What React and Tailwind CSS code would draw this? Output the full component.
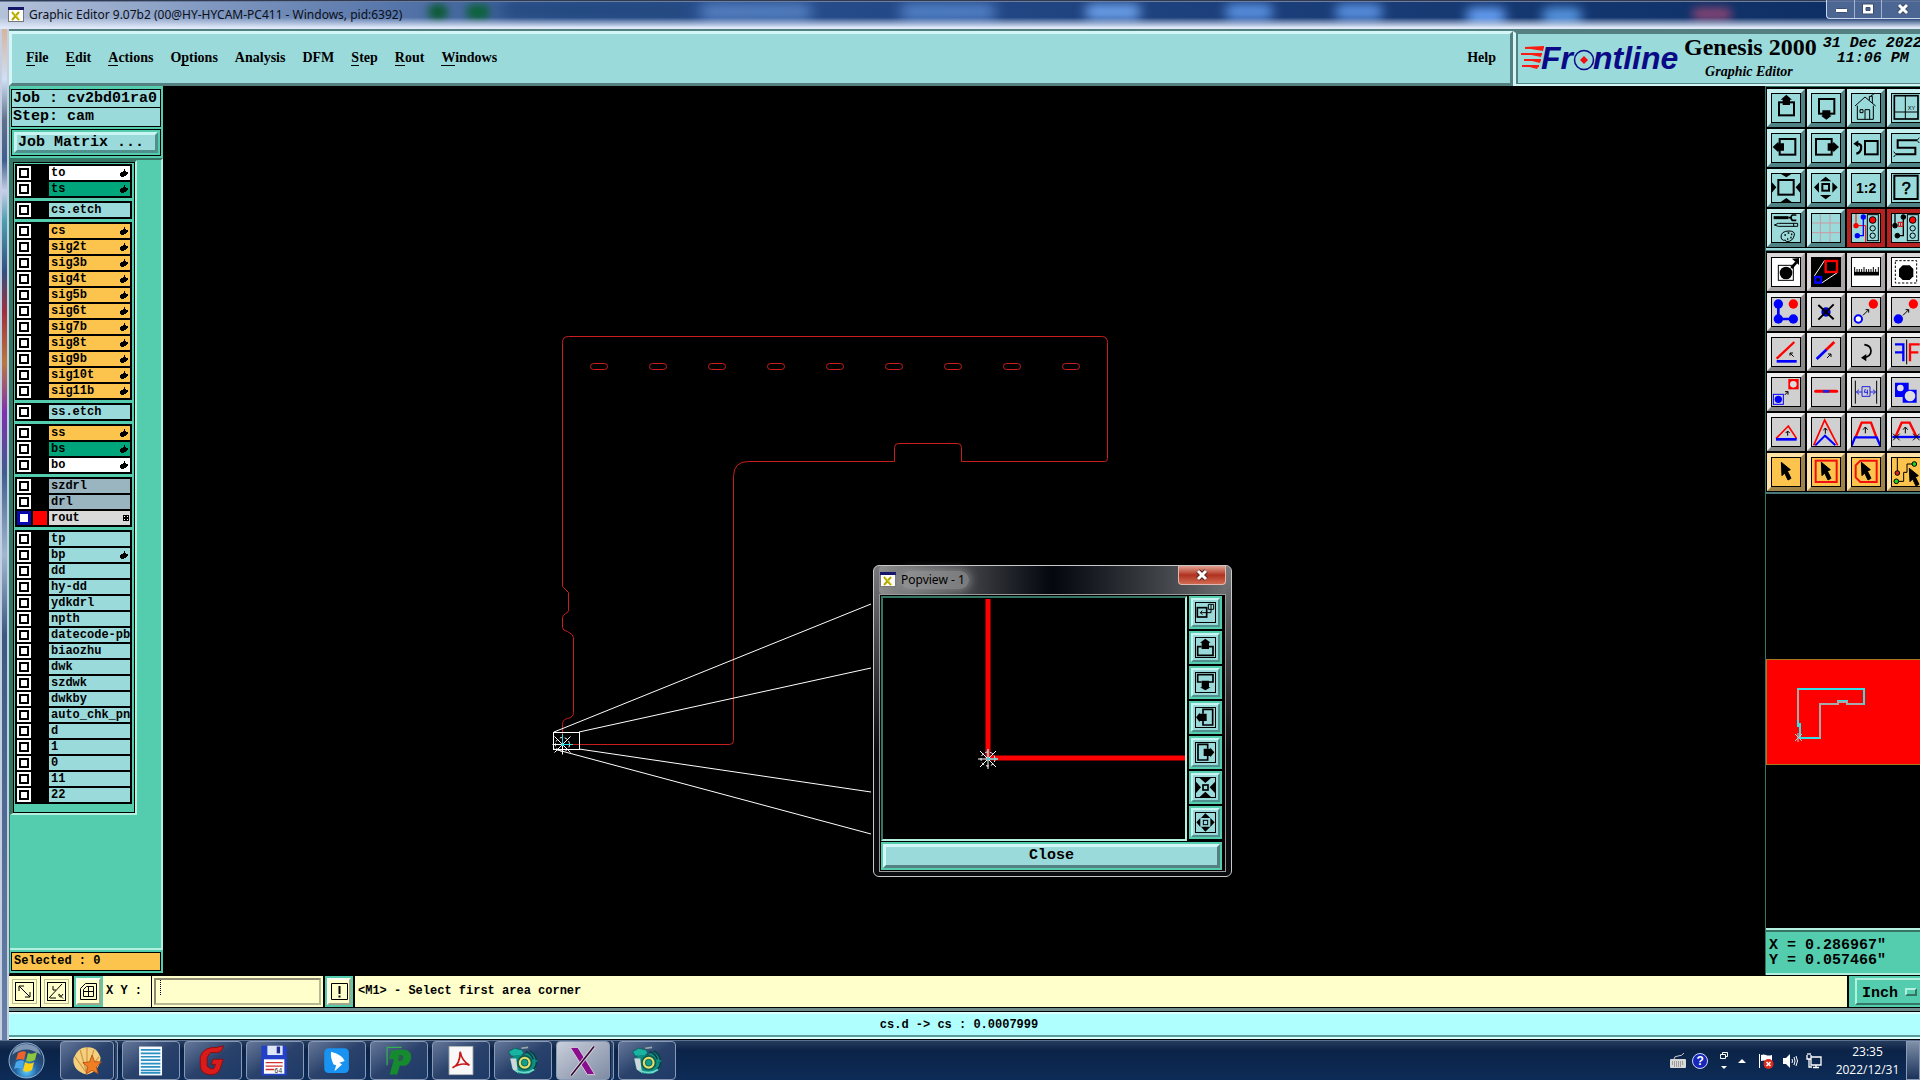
import React from "react";

const mono12 = "font-['Liberation_Mono',monospace] text-[12px] font-bold";
const mono15 = "font-['Liberation_Mono',monospace] text-[15px] font-bold";

const aquaBevel = "bg-[#9bdadb] border-3 border-t-[#d3f7f6] border-l-[#d3f7f6] border-b-[#558082] border-r-[#558082]";
const greenBevel = "bg-[#9bdadb] border-3 border-t-[#c8f5f1] border-l-[#c8f5f1] border-b-[#4f8f8c] border-r-[#4f8f8c]";

const menus = [
  ["", "F", "ile"], ["", "E", "dit"], ["", "A", "ctions"], ["O", "p", "tions"], ["Analysis", "", ""],
  ["DFM", "", ""], ["", "S", "tep"], ["", "R", "out"], ["", "W", "indows"],
];

const W = "bg-white", G = "bg-[#00a57c]", A = "bg-[#9bdadb]", O = "bg-[#fcc44c]", B = "bg-[#9ab4c0]", L = "bg-[#d9d9d9]";
const groups = [
  [["to", W, "h"], ["ts", G, "h"]],
  [["cs.etch", A]],
  ["cs", "sig2t", "sig3b", "sig4t", "sig5b", "sig6t", "sig7b", "sig8t", "sig9b", "sig10t", "sig11b"].map((n) => [n, O, "h"]),
  [["ss.etch", A]],
  [["ss", O, "h"], ["bs", G, "h"], ["bo", W, "h"]],
  [["szdrl", B], ["drl", B], ["rout", L, "g"]],
  [["tp", A], ["bp", A, "h"], ...["dd", "hy-dd", "ydkdrl", "npth", "datecode-pbd", "biaozhu", "dwk", "szdwk", "dwkby", "auto_chk_pnl", "d", "1", "0", "11", "22"].map((n) => [n, A])],
];

function WinIcon() {
  return (
    <svg className="h-[15px] w-4 shrink-0" viewBox="0 0 16 15">
      <rect width="16" height="15" fill="#777" />
      <rect x="1" y="3" width="14" height="11" fill="#fff" />
      <rect width="16" height="3" fill="#15156a" />
      <path d="M4 5l7 8M11 5l-7 8" stroke="#b5a800" strokeWidth="2" />
      <path d="M5 5l7 8" stroke="#e6dc30" strokeWidth="1" />
    </svg>
  );
}

function TitleBar() {
  return (
    <header className="relative flex h-[29px] shrink-0 items-start overflow-hidden bg-gradient-to-r from-[#b4c2da] via-[#2c5292] via-30% to-[#0b2d63]">
      <div className="absolute top-1 left-[428px] h-4 w-5 rounded-full bg-[#0a5a30] blur-[4px]" />
      <div className="absolute top-1 left-[466px] h-4 w-6 rounded-full bg-[#0c6238] blur-[4px]" />
      <div className="absolute top-0 left-[500px] h-5 w-48 rounded-full bg-[#24497f] blur-[8px]" />
      <div className="absolute top-1 left-[700px] h-4 w-28 rounded-full bg-[#6d9ce0]/70 blur-[7px]" />
      <div className="absolute top-1 left-[900px] h-4 w-24 rounded-full bg-[#6ea3ee]/70 blur-[7px]" />
      <div className="absolute top-1 left-[1085px] h-4 w-14 rounded-full bg-[#6ea3ee] blur-[6px]" />
      <div className="absolute top-1 left-[1225px] h-4 w-12 rounded-full bg-[#5b93e4] blur-[6px]" />
      <div className="absolute top-1 left-[1335px] h-4 w-12 rounded-full bg-[#5b93e4] blur-[6px]" />
      <div className="absolute top-2 left-[1466px] h-4 w-10 rounded-full bg-[#6aa5fb] blur-[6px]" />
      <div className="absolute top-2 left-[1542px] h-4 w-10 rounded-full bg-[#5a9be6] blur-[6px]" />
      <div className="absolute top-2 left-[1692px] h-3 w-10 rounded-full bg-[#8a4474] blur-[5px]" />
      <div className="absolute inset-0 bg-gradient-to-b from-transparent from-60% to-[#dfe8f8] to-95%" />
      <div className="absolute inset-x-0 top-0 h-[2px] bg-gradient-to-b from-[#141c30] to-[#8fa3c6]" />
      <div className="relative ml-2 flex h-[29px] items-center gap-[5px]">
        <WinIcon />
        <h1 className="font-['Noto_Sans','Open_Sans',sans-serif] text-[12px] font-normal text-[#0b0f18]">
          Graphic Editor 9.07b2 (00@HY-HYCAM-PC411 - Windows, pid:6392)
        </h1>
      </div>
      <div className="relative ml-auto flex h-[19px] rounded-bl border-b border-l border-[#c9d6ea] bg-[#5d74a0]/80">
        <button aria-label="Minimize" className="flex w-7 items-center justify-center border-r border-[#c9d6ea]/70">
          <svg className="h-4 w-4" viewBox="0 0 16 16"><rect x="2.5" y="7.5" width="12" height="4" rx="1" fill="#fff" stroke="#3c4c6c" /></svg>
        </button>
        <button aria-label="Maximize" className="flex w-[27px] items-center justify-center border-r border-[#c9d6ea]/70">
          <svg className="h-4 w-4" viewBox="0 0 16 16"><path d="M2.500 3h11v10h-11zM6 6.500v3h4v-3z" fill="#fff" fillRule="evenodd" stroke="#3c4c6c" /></svg>
        </button>
        <button aria-label="Close window" className="flex w-[38px] items-center justify-center pl-1">
          <svg className="h-4 w-4" viewBox="0 0 16 16"><path d="M4 4l8 8M12 4l-8 8" stroke="#3c4c6c" strokeWidth="5" /><path d="M4 4l8 8M12 4l-8 8" stroke="#fff" strokeWidth="3" /></svg>
        </button>
      </div>
    </header>
  );
}

function MenuBar() {
  return (
    <div className="flex h-[57px] shrink-0 border-t-2 border-[#558082] bg-[#558082] font-['Liberation_Serif',serif] font-bold text-black">
      <nav className="flex flex-1 items-center border-3 border-t-[#d3f7f6] border-r-[#558082] border-b-[#558082] border-l-[#d3f7f6] bg-[#9bdadb] pr-[14px] pb-[2px] pl-[14px] text-[14px]">
        <div className="flex flex-1 gap-[17px]">
          {menus.map(([a, u, b]) => (
            <button key={a + u + b} className="leading-4">
              {a}<span className="border-b border-black">{u}</span>{b}
            </button>
          ))}
        </div>
        <button className="leading-4">Help</button>
      </nav>
      <div className="flex w-[407px] shrink-0 overflow-hidden border-t-2 border-b-2 border-l-3 border-t-[#558082] border-b-[#d3f7f6] border-l-[#d3f7f6] bg-[#9bdadb] shadow-[inset_1px_0_0_1px_#558082]">
        <svg className="mt-[11px] ml-[5px] h-7 w-[160px] shrink-0 overflow-visible" viewBox="0 0 160 28">
          <path d="M4 4l19-1-1 4zM0 9l21 0-1 4zM3 15l17 0-1 4zM1 21l17 0-2 4z" fill="#fb1b12" />
          <path d="M4 4l19-1M0 10h21M3 16h17M1 22h17" stroke="#fb1b12" strokeWidth="2" />
          <g fill="#0a0a86" fontFamily="Liberation Sans, sans-serif" fontWeight="bold" fontStyle="italic" fontSize="32">
            <text x="20" y="25">Fr</text>
            <text x="72" y="25">ntline</text>
          </g>
          <circle cx="63" cy="16" r="9.500" fill="#9bdadb" stroke="#0a0a86" strokeWidth="1.500" />
          <path d="M63 12l4 4-4 4-4-4z" fill="#f01010" />
        </svg>
        <div className="flex shrink-0 flex-col items-center whitespace-nowrap">
          <span className="ml-[3px] text-[24px] leading-[28px]">Genesis 2000</span>
          <span className="text-[14px] leading-[22px] italic">Graphic Editor</span>
        </div>
        <div className={`ml-[6px] shrink-0 whitespace-pre pt-[3px] italic ${mono15}`}>
          <div className="leading-[15px]">31 Dec 2022</div>
          <div className="pl-[14px] leading-[15px]">11:06 PM</div>
        </div>
      </div>
    </div>
  );
}

function LayerRow({ name, color, mark }) {
  const on = name === "rout";
  return (
    <label className="flex h-4 items-center gap-[2px] pr-[2px] pl-[2px]">
      <input
        type="checkbox"
        defaultChecked={on}
        aria-label={name}
        className="h-[14px] w-[14px] shrink-0 appearance-none border-2 border-white bg-white shadow-[inset_0_0_0_2px_#000] checked:border-[#0a0aa0] checked:bg-white checked:shadow-[inset_0_0_0_1px_#0000c0]"
      />
      <span className={`h-[14px] w-[14px] shrink-0 ${on ? "bg-[#ff0000]" : "bg-black"}`} />
      <span className={`flex h-[14px] min-w-0 flex-1 items-center overflow-hidden pl-[2px] leading-[14px] whitespace-nowrap text-black ${color}`}>
        <span className="flex-1">{name}</span>
        {mark === "h" && (
          <svg className="mr-[2px] h-2 w-2 shrink-0" viewBox="0 0 8 8"><path d="M5 0v2h1v1h2v2H7v1H6v1H4v1H1V7H0V4h1V3h2V2h1V0z" fill="#000" /></svg>
        )}
        {mark === "g" && (
          <svg className="mr-[1px] h-[6px] w-[6px] shrink-0" viewBox="0 0 6 6" shapeRendering="crispEdges"><path d="M0 0h6v6H0z" /><path d="M1 1h1v1H1zM4 1h1v1H4zM1 4h1v1H1zM4 4h1v1H4z" fill="#fff" /></svg>
        )}
      </span>
    </label>
  );
}

function LeftPanel() {
  return (
    <aside className="flex w-[154px] shrink-0 flex-col border-b-2 border-l border-b-black border-l-[#2f7a66] bg-[#54cdae] text-black">
      <div className="border-2 border-t-3 border-l-1 border-[#54cdae]">
        <div className={`h-[19px] overflow-hidden border border-black bg-[#9bdadb] pl-px leading-[18px] whitespace-nowrap ${mono15}`}>Job : cv2bd01ra0</div>
        <div className={`h-[19px] border border-t-0 border-black bg-[#9bdadb] pl-px leading-[18px] whitespace-nowrap ${mono15}`}>Step: cam</div>
        <div className="mt-[2px] border border-black p-[2px]">
          <button className={`block h-[21px] w-full pl-px text-left leading-[15px] ${mono15} ${greenBevel}`}>Job Matrix ...</button>
        </div>
      </div>
      <div className="flex min-h-0 flex-1 flex-col border-t-2 border-r-2 border-b-2 border-t-[#357563] border-r-[#b3f0e0] border-b-[#b3f0e0]">
        <div className="w-[127px] border-t-2 border-r-2 border-b-2 border-l-3 border-t-[#357563] border-r-[#b3f0e0] border-b-[#b3f0e0] border-l-[#357563]">
          <div className={`flex flex-col gap-[3px] border border-black pt-px pr-[2px] pb-[8px] pl-px ${mono12}`}>
            {groups.map((g, i) => (
              <div key={i} className="bg-black py-px">
                {g.map(([n, c, m]) => <LayerRow key={n} name={n} color={c} mark={m} />)}
              </div>
            ))}
          </div>
        </div>
      </div>
      <div className="border-2 border-l-1 border-[#54cdae]">
        <div className={`h-[19px] border border-black bg-[#fcc44c] pl-[2px] leading-4 whitespace-pre ${mono12}`}>Selected : 0</div>
      </div>
    </aside>
  );
}

const arrowHead = (x, y) => <path d={`M${x} ${y}h-9M${x} ${y}v9`} />;
const Cursor = ({ x = 0 }) => <path transform={`translate(${x} 0)`} d="M31 16L58 38L49 42L60 64L51 69L41 48L33 56Z" fill="#000" />;
const Signal = () => (
  <g fill="none" stroke="#000" strokeWidth="3">
    <rect x="49" y="5" width="33" height="78" />
    <circle cx="65" cy="21" r="10" fill="#f00" />
    <circle cx="65" cy="46" r="8" />
    <circle cx="65" cy="68" r="8" />
  </g>
);

const icons = {
  "Pan up": <><rect x="24" y="28" width="45" height="39" fill="none" strokeWidth="6" /><path d="M46 5L63 20H57V36H35V20H29Z" fill="#000" stroke="none" /></>,
  "Pan down": <><rect x="24" y="18" width="46" height="44" fill="none" strokeWidth="6" /><path d="M46 80L62 68H58V52H34V68H30Z" fill="#000" stroke="none" /></>,
  Home: <path d="M12 39L42 12L74 39M19 38V79H67V38M27 50h9v9h-9zM42 79V50H56V79M55 22V10h9v20M60 8l8-4" fill="none" />,
  "Pan to coordinates": <><rect x="10" y="8" width="71" height="70" fill="none" strokeWidth="5" /><path d="M43 8V78M10 57H80" /><text x="50" y="52" fontSize="17" fill="#000" stroke="none" fontFamily="Liberation Sans, sans-serif">XY</text></>,
  "Pan left": <><rect x="26" y="18" width="47" height="47" fill="none" strokeWidth="6" /><path d="M5 42L22 26V31H39V53H22V58Z" fill="#000" stroke="none" /></>,
  "Pan right": <><rect x="15" y="18" width="47" height="47" fill="none" strokeWidth="6" /><path d="M84 42L67 26V31H50V53H67V58Z" fill="#000" stroke="none" /></>,
  Previous: <><rect x="42" y="24" width="38" height="40" fill="none" strokeWidth="6" /><path d="M17 32Q34 32 30 48Q27 60 16 62" fill="none" strokeWidth="7" /><path d="M7 32L22 22V43Z" fill="#000" stroke="none" /></>,
  Serpentine: <><path d="M78 22H20V44H73V64H15" fill="none" strokeWidth="6" /><path d="M78 22l7-8m-7 8l7 8M15 64l-7-8m7 8l-7 8" /></>,
  "Zoom in": <><rect x="22" y="21" width="46" height="44" fill="none" strokeWidth="6" /><path d="M29 2H62L46 13ZM29 87H62L46 75ZM2 27V60L16 43ZM88 27V60L74 43Z" fill="#000" stroke="none" /></>,
  "Zoom out": <><rect x="34" y="33" width="20" height="20" fill="none" strokeWidth="6" /><path d="M27 25H61L44 11ZM27 66H61L44 79ZM24 28V59L9 43ZM64 28V59L80 43Z" fill="#000" stroke="none" /></>,
  "Scale one to two": <text x="15" y="59" fontSize="42" fontWeight="bold" fill="#000" stroke="none" fontFamily="Liberation Sans, sans-serif">1:2</text>,
  Help: <><rect x="10" y="8" width="70" height="70" fill="none" strokeWidth="6" /><text x="32" y="62" fontSize="48" fill="#000" strokeWidth="2" fontFamily="Liberation Sans, sans-serif">?</text></>,
  Tools: <><path d="M8 14H52" strokeWidth="9" /><path d="M52 14H62M76 6H64Q56 14 64 22H76" fill="none" strokeWidth="5" /><path d="M10 36l12-5H80v9H22ZM68 31v9" fill="none" /><path d="M30 72Q30 54 54 54Q72 54 70 66Q66 86 46 86Q44 78 38 82Q30 80 30 72Z" fill="none" /><path d="M40 66h5M50 60h5M60 64h4M58 74h4M48 78h4" strokeWidth="5" /></>,
  Grid: <path d="M28 0V90M57 0V90M0 30H90M0 59H90" stroke="#c89aa4" />,
  "Net signals": <><path d="M15 0V38H44V88" stroke="#f00" fill="none" /><path d="M37 12V68H19" stroke="#00f" fill="none" strokeWidth="4" /><circle cx="15" cy="38" r="8" fill="#f00" stroke="none" /><circle cx="37" cy="12" r="8" fill="#00f" stroke="none" /><circle cx="19" cy="68" r="8" fill="#00f" stroke="none" /><Signal /></>,
  "Net errors": <><path d="M12 0V38M37 12V68H19" fill="none" strokeWidth="4" /><path d="M22 28v12h14V28M29 28v12M20 28h16" stroke="#d00" fill="none" /><circle cx="12" cy="38" r="7" /><circle cx="37" cy="12" r="7" /><circle cx="19" cy="68" r="7" /><Signal /></>,
  "Select feature": <><rect x="22" y="25" width="45" height="45" fill="none" /><circle cx="45" cy="48" r="19" fill="#000" stroke="none" /><path d="M61 33L76 16" strokeWidth="8" /><path d="M84 3V24L63 5Z" fill="#000" stroke="none" /></>,
  Popview: <><rect x="2" y="2" width="86" height="86" fill="#000" stroke="none" /><path d="M41 10L10 57M79 47L32 78" stroke="#fff" /><rect x="44" y="12" width="34" height="33" fill="none" stroke="#f00" strokeWidth="7" /><rect x="13" y="60" width="17" height="17" fill="none" stroke="#00f" strokeWidth="7" /></>,
  Measure: <><path d="M9 50H84" strokeWidth="11" /><path d="M11 30V50M18 36V50M25 36V50M32 36V50M39 30V50M46 36V50M53 36V50M60 36V50M67 30V50M74 36V50M82 30V50" /></>,
  "Select area": <><rect x="13" y="11" width="64" height="67" fill="none" strokeDasharray="7 5" /><path d="M35 25H56L67 36V58L56 69H35L24 58V36Z" fill="#000" stroke="none" /></>,
  "Connect dots": <><path d="M22 21V66H67" stroke="#00f" strokeWidth="8" fill="none" /><g stroke="none" fill="#00f"><circle cx="22" cy="21" r="14" /><circle cx="22" cy="66" r="14" /><circle cx="67" cy="66" r="14" /><circle cx="67" cy="21" r="14" fill="#f00" /></g></>,
  Delete: <><circle cx="45" cy="45" r="14" fill="#0000c8" stroke="none" /><path d="M22 24L68 67M68 22L22 68" strokeWidth="6" /></>,
  Copy: <><circle cx="67" cy="21" r="14" fill="#f00" stroke="none" /><circle cx="22" cy="66" r="11" fill="#fff" stroke="#00f" strokeWidth="6" /><path d="M36 55L53 38" />{arrowHead(53, 38)}</>,
  Move: <><circle cx="67" cy="21" r="14" fill="#f00" stroke="none" /><circle cx="22" cy="66" r="14" fill="#00f" stroke="none" /><path d="M36 55L53 38" />{arrowHead(53, 38)}</>,
  Rotate: <><path d="M17 65L70 15" stroke="#f00" strokeWidth="7" /><path d="M17 73H77" stroke="#00f" strokeWidth="8" /><path d="M68 59L57 48M57 56V48H66" fill="none" /></>,
  Extend: <><path d="M44 40L70 15" stroke="#f00" strokeWidth="8" /><path d="M17 66L46 38" stroke="#00f" strokeWidth="8" /><path d="M48 63L60 51" />{arrowHead(60, 51)}</>,
  Turn: <><path d="M40 23Q60 26 60 42Q60 60 36 62" fill="none" strokeWidth="5" /><path d="M46 51V73L30 62Z" fill="#000" stroke="none" /></>,
  Mirror: <><path d="M12 22H37V73M12 46H37" stroke="#00f" strokeWidth="7" fill="none" /><path d="M57 73V22H86M57 46H82" stroke="#f00" strokeWidth="7" fill="none" /><path d="M47 8V82" /></>,
  Transform: <><rect x="52" y="6" width="31" height="31" fill="#f00" stroke="none" /><circle cx="67" cy="22" r="10" fill="#ddd" stroke="none" /><rect x="7" y="52" width="30" height="30" fill="none" stroke="#00f" /><circle cx="22" cy="67" r="11" fill="#00f" stroke="none" /><path d="M41 54L51 44" />{arrowHead(51, 44)}</>,
  Resize: <><path d="M14 43H77" stroke="#f00" strokeWidth="9" strokeLinecap="round" /><path d="M36 43H55" stroke="#2020e0" strokeWidth="8" /></>,
  Spacing: <><path d="M13 11V80M77 11V80" /><path d="M33 29H57V58H33ZM17 45H33M57 45H73M24 38L16 45L24 52M66 38L74 45L66 52M43 36L40 46H51M49 38V53" fill="none" stroke="#22d" /></>,
  Merge: <><path d="M12 17H53V38H77V77H35V60H12Z" fill="#00f" stroke="none" /><circle cx="28" cy="33" r="10" fill="#ddd" stroke="none" /><circle cx="57" cy="57" r="16" fill="#ddd" stroke="none" /></>,
  "Flat triangle": <><path d="M15 65L52 27L77 65" stroke="#f00" strokeWidth="5" fill="none" /><path d="M15 67H77" stroke="#00f" strokeWidth="8" /><path d="M50 56V43M44 48L50 42L56 48" fill="none" /></>,
  "Tall triangle": <><path d="M8 85L41 9L80 85" stroke="#f00" strokeWidth="5" fill="none" /><path d="M13 85L42 56L73 85" stroke="#00f" strokeWidth="6" fill="none" /><path d="M43 50V34M37 40L43 33L49 40" fill="none" /></>,
  Trapezoid: <><path d="M14 60L32 17H60L76 60" stroke="#f00" strokeWidth="7" fill="none" /><path d="M2 86L12 61H77L88 86" stroke="#00f" strokeWidth="7" fill="none" /><path d="M43 49V31M36 38L43 30L50 38" fill="none" /></>,
  "Cut trapezoid": <><path d="M14 58L32 17H56L76 58" stroke="#f00" strokeWidth="7" fill="none" /><path d="M4 60H90" stroke="#00f" strokeWidth="7" /><path d="M6 50L26 70M26 50L6 70M66 50L86 70M86 50L66 70" /><path d="M43 49V31M36 38L43 30L50 38" fill="none" /></>,
  Pointer: <Cursor />,
  "Box pointer": <><rect x="14" y="11" width="63" height="64" fill="none" stroke="#f01010" strokeWidth="6" /><Cursor /></>,
  "Polygon pointer": <><path d="M28 11H77V75H28L14 61V25Z" fill="none" stroke="#f01010" strokeWidth="6" /><Cursor /></>,
  "Net pointer": <><path d="M19 2V48M16 73H38V46H48V21H70" fill="none" /><circle cx="19" cy="48" r="7" fill="#e02020" /><circle cx="16" cy="73" r="7" fill="#20d020" /><circle cx="70" cy="21" r="7" fill="#20d020" /><g transform="translate(24 18)"><Cursor /></g></>,
};

const toneA = "bg-[#9bdadb] border-t-[#c6f0f0] border-l-[#c6f0f0] border-b-[#4f8284] border-r-[#4f8284]";
const toneR = "bg-[#9bdadb] border-[#b52222]";
const toneW = "bg-white border-t-[#dcd8d9] border-l-[#dcd8d9] border-b-[#aaa5a6] border-r-[#aaa5a6]";
const toneG = "bg-[#d0d0d0] border-t-[#efefef] border-l-[#efefef] border-b-[#8a8a8a] border-r-[#8a8a8a]";
const toneO = "bg-[#fcc44c] border-t-[#ffe3a6] border-l-[#ffe3a6] border-b-[#a08348] border-r-[#a08348]";
const toneFor = (name, i) => {
  if (name.startsWith("Net s") || name.startsWith("Net e")) return toneR;
  if (i < 16) return toneA;
  if (i < 20) return toneW;
  return i < 36 ? toneG : toneO;
};

function ToolGrid({ from, to }) {
  const names = Object.keys(icons);
  return (
    <div className="grid grid-cols-[repeat(4,38px)] gap-[2px] bg-black pt-[2px] pb-px pl-px">
      {names.slice(from, to).map((n, i) => (
        <button key={n} aria-label={n} className={`h-[38px] w-[38px] border-4 ${toneFor(n, from + i)}`}>
          <svg className="h-[30px] w-[30px]" viewBox="0 0 90 90" stroke="#000" strokeWidth="3">
            {icons[n]}
            <rect x="1.500" y="1.500" width="87" height="87" fill="none" stroke="#000" strokeWidth="3" />
          </svg>
        </button>
      ))}
    </div>
  );
}

function RightPanel() {
  return (
    <aside className="flex w-[155px] shrink-0 flex-col overflow-hidden border-l border-[#357563] bg-black">
      <div className="border-t border-[#357563]"><ToolGrid from={0} to={16} /></div>
      <div className="h-[3px] border-b border-[#4a7878] bg-[#9bdadb]" />
      <div className="border-b-2 border-[#4a7878]"><ToolGrid from={16} to={40} /></div>
      <div className="flex flex-1 flex-col border-b-2 border-[#b3f0e0]">
        <div className="flex-[164]" />
        <svg className="h-[106px] w-full border-y border-l border-[#a87a20] bg-[#ff0000]" viewBox="0 0 153 104" preserveAspectRatio="xMinYMin slice" fill="none">
          <path d="M31 67V29H97V44H80V41H71V44H53V78H33V63" stroke="#33e0e6" strokeWidth="2" />
          <path d="M31 60V29M53 78V44H71V42H80V44H96" stroke="#a9a9a9" strokeWidth="2" />
          <path d="M28 74l7 7M35 74l-7 7M31 73v9" stroke="#a5d5d5" />
        </svg>
        <div className="flex-[162]" />
      </div>
      <div className={`h-[45px] border-t-2 border-b-2 border-t-[#357563] border-b-[#b3f0e0] bg-[#54cdae] pt-[6px] pl-[3px] whitespace-pre text-black ${mono15}`}>
        <div className="leading-[15px]">X = 0.286967"</div>
        <div className="leading-[15px]">Y = 0.057466"</div>
      </div>
    </aside>
  );
}

const Snowflake = ({ x, y }) => (
  <g transform={`translate(${x} ${y})`} stroke="#fff" fill="none">
    <circle r="7" strokeDasharray="3 2" />
    <path d="M-10 0H10M0-10V10M-8-8L8 8M8-8L-8 8" />
    <path d="M0-10V0H10" stroke="#28e0e8" />
    <circle r="1.500" fill="#28e0e8" stroke="none" />
  </g>
);

const popIcons = [
  ["Link views", <><rect x="7" y="17" width="28" height="28" strokeWidth="5" /><path d="M40 7H56V22H40ZM48 7V32H16M22 26L16 32L22 38" strokeWidth="3" /></>],
  ["Up", <><path d="M20 29H8V55H54V29H42" strokeWidth="5" /><path d="M31 5L47 17H42V36H20V17H15Z" fill="#000" stroke="none" /></>],
  ["Down", <><path d="M20 30H8V8H54V30H42" strokeWidth="5" /><path d="M31 55L47 46H42V26H20V46H15Z" fill="#000" stroke="none" /></>],
  ["Left", <><path d="M24 20V7H53V54H24V42" strokeWidth="5" /><path d="M3 31L14 17V20H35V42H14V46Z" fill="#000" stroke="none" /></>],
  ["Right", <><path d="M38 20V7H9V54H38V42" strokeWidth="5" /><path d="M58 31L46 17V20H26V42H46V46Z" fill="#000" stroke="none" /></>],
  ["In", <><rect x="24" y="24" width="15" height="15" strokeWidth="5" /><path d="M14 3H48L31 18ZM14 60H48L31 44ZM3 14V48L18 31ZM60 14V48L44 31Z" fill="#000" stroke="none" /></>],
  ["Out", <><rect x="25" y="25" width="13" height="13" strokeWidth="3" /><path d="M18 18H46L31 4ZM18 44H46L31 59ZM16 18V45L4 31ZM46 18V45L59 31Z" fill="#000" stroke="none" /></>],
];

function PopviewWindow() {
  return (
    <section className="absolute top-[479px] left-[710px] w-[359px] rounded-md border border-[#c8c8c8] bg-gradient-to-b from-[#77797b] to-[#0b0c10] to-60% px-[5px] pb-[4px]">
      <div className="flex h-[28px] items-center rounded bg-gradient-to-r from-[#8e8e8e] via-[#05070d] via-50% to-[#6b6d70]">
        <div className="mb-px flex flex-1 items-center gap-[5px] pl-px">
          <WinIcon />
          <h2 className="rounded-full bg-[#a0a0a0]/60 pr-1 font-['Noto_Sans','Open_Sans',sans-serif] text-[12px] text-black shadow-[0_0_8px_2px_#a0a0a099]">Popview - 1</h2>
        </div>
        <button aria-label="Close popview" className="mb-[9px] flex h-[19px] w-12 items-center justify-center rounded-b border border-t-0 border-[#e0b8b0] bg-gradient-to-b from-[#e0a090] via-[#b03020] via-50% to-[#d06a50]">
          <svg className="h-3 w-3" viewBox="0 0 12 12"><path d="M2 2l8 8M10 2l-8 8" stroke="#522" strokeWidth="5" /><path d="M2 2l8 8M10 2l-8 8" stroke="#fff" strokeWidth="3" /></svg>
        </button>
      </div>
      <div className="border border-[#9a9a9a] bg-black py-px pr-[3px] pl-px">
        <div className="flex gap-[2px]">
          <div className="flex-1 border-2 border-t-[#357563] border-r-[#b3f0e0] border-b-[#b3f0e0] border-l-[#357563]">
            <svg className="block h-[241px] w-full">
              <path d="M105 1V160H302" fill="none" stroke="#f00" strokeWidth="5" />
              <Snowflake x={105} y={161} />
            </svg>
          </div>
          <div className="flex flex-col gap-[2px]">
            {popIcons.map(([n, d]) => (
              <button key={n} aria-label={n} className={`h-[33px] w-[33px] p-px outline-2 -outline-offset-2 outline-[#54cdae] ${greenBevel} border-4`}>
                <svg className="m-px h-[21px] w-[21px]" viewBox="0 0 63 63" fill="none" stroke="#000">
                  {d}
                  <rect x="1.500" y="1.500" width="60" height="60" strokeWidth="3" />
                </svg>
              </button>
            ))}
          </div>
        </div>
        <div className="mt-px border-2 border-[#54cdae]">
          <button className={`block h-[24px] w-full leading-[18px] text-black ${mono15} ${aquaBevel}`}>Close</button>
        </div>
      </div>
    </section>
  );
}

function Canvas() {
  return (
    <main className="relative min-w-0 flex-1 overflow-hidden bg-black">
      <svg className="block h-full w-full">
        <g transform="translate(-163 -86)" fill="none">
          <g stroke="#c81e1e" transform="translate(.5 .5)">
            <path d="M562 586V342Q562 336 568 336H1101Q1107 336 1107 342V458Q1107 461 1104 461H961V447Q961 443 957 443H898Q894 443 894 447V461H748Q733 461 733 476V740Q733 744 729 744H562V724Q562 719 567 718Q573 717 573 712V637Q573 634 567 631Q562 630 562 627V617Q562 615 565 613Q568 612 568 610V592Z" />
            {[0, 1, 2, 3, 4, 5, 6, 7, 8].map((i) => <rect key={i} x={590 + i * 59} y="363" width="17" height="6" rx="3" />)}
          </g>
          <path d="M554 732L871 604M579 732L871 668M579 749L871 792M554 749L871 834" stroke="#fff" />
          <rect x="553.500" y="732.500" width="26" height="17" stroke="#fff" />
          <Snowflake x={562.5} y={744.5} />
        </g>
      </svg>
      <PopviewWindow />
    </main>
  );
}

const cmdBevel = "border-2 border-t-[#fffff0] border-l-[#fffff0] border-b-[#a5a58a] border-r-[#a5a58a] bg-[#ffffcc]";

function CommandBar() {
  return (
    <div className={`flex h-[33px] shrink-0 border-y border-black bg-black text-black ${mono12}`}>
      <button aria-label="Snap" className="mr-px w-[31px] bg-[#ffffcc] p-[3px]">
        <svg className="h-[25px] w-[25px]" viewBox="0 0 25 25" fill="none" stroke="#000"><rect x=".5" y=".5" width="24" height="24" stroke="#bdbd98" /><rect x="3.500" y="3.500" width="18" height="18" /><path d="M7 7l11 11M7 12V7h5M18 13v5h-5" /></svg>
      </button>
      <button aria-label="Angle" className="mr-[2px] w-[31px] bg-[#ffffcc] p-[3px]">
        <svg className="h-[25px] w-[25px]" viewBox="0 0 25 25" fill="none" stroke="#000"><rect x=".5" y=".5" width="24" height="24" stroke="#bdbd98" /><rect x="3.500" y="3.500" width="18" height="18" /><path d="M5 19L18 5M6 19h6M9 7v4h3M19 15q-3 5-4 1.500t3 2l1 1" /></svg>
      </button>
      <button aria-label="Grid snap" className="w-[29px] bg-[#54cdae] p-[2px]">
        <span className={`flex h-[27px] items-center justify-center ${cmdBevel}`}>
          <svg className="h-[17px] w-[17px]" viewBox="0 0 17 17" fill="none" stroke="#000"><path d="M5.500.5h11v16H.5V5.500zM8.500 3.500v10M3.500 8.500h10M6.500 3.500h7v10h-10v-7z" /></svg>
        </span>
      </button>
      <label htmlFor="xy" className="w-12 bg-[#ffffcc] pl-[3px] leading-[31px] whitespace-pre">X Y :</label>
      <div className="relative mr-px ml-px w-[171px] bg-[#ffffcc] p-[2px]">
        <input id="xy" type="text" className="h-[27px] w-full border-2 border-t-[#8b8b72] border-r-[#b8b894] border-b-[#b8b894] border-l-[#8b8b72] bg-[#ffffcc] px-1 outline-none" />
        <svg className="pointer-events-none absolute top-1 left-[7px] h-[15px] w-[3px]"><path d="M1.500 0v15" stroke="#000" strokeDasharray="1 1" /></svg>
      </div>
      <button aria-label="Interrupt" className="mr-[2px] ml-px w-[28px] bg-[#54cdae] p-[2px]">
        <span className={`flex h-[27px] items-center justify-center ${cmdBevel}`}>
          <svg className="h-[17px] w-[17px]" viewBox="0 0 17 17" fill="none" stroke="#000"><path d="M.5.500h16v16H.5z" /><path d="M8.500 3v8M8.500 12.500v2" strokeWidth="2" /></svg>
        </span>
      </button>
      <p className="flex-1 bg-[#ffffcc] pl-[3px] leading-[31px]">&lt;M1&gt; - Select first area corner</p>
      <div className="relative ml-[2px] w-[71px] overflow-hidden bg-[#54cdae] py-[2px] pl-[6px]">
        <select aria-label="Units" defaultValue="Inch" className={`h-[27px] w-20 appearance-none border-2 border-t-[#b3f0e0] border-r-[#357563] border-b-[#357563] border-l-[#b3f0e0] bg-[#54cdae] pt-[3px] pl-[5px] outline-none ${mono15}`}>
          <option>Inch</option>
          <option>MM</option>
        </select>
        <span className="pointer-events-none absolute top-3 right-[3px] h-2 w-3 border-2 border-t-[#b3f0e0] border-r-[#357563] border-b-[#357563] border-l-[#b3f0e0]" />
      </div>
    </div>
  );
}

const Disk = () => <><path d="M3 2h28l2 3v32H3z" fill="#2340c8" /><path d="M10 2h18v11H10z" fill="#dfe6f5" /><path d="M21 3h4v8h-4z" fill="#1c2f90" /><path d="M6 18h24v17H6z" fill="#fff" /><path d="M8 22h20M8 26h20M8 30h10" stroke="#d03030" strokeWidth="1.500" /><text x="18" y="34" fontSize="8" fill="#333" fontFamily="Liberation Mono, monospace">64</text></>;
const Camera = () => (
  <>
    <path d="M2 9l7-4 9 2 2 4-6 4-9-1z" fill="#19b3a4" stroke="#0a5f5a" />
    <path d="M17 5l8-1" stroke="#9aa" strokeWidth="2" />
    <path d="M4 17l7-4h9l6-4 7 4 3 7-2 9-8 6H14l-8-6z" fill="#0f8f83" />
    <path d="M4 17l3 13 6 4-2-17z" fill="#cfd8dc" />
    <path d="M22 9q7 2 9 9M27 8q6 3 8 11M31 30q4-3 4-9" stroke="#0a3f48" strokeWidth="2" fill="none" />
    <circle cx="21" cy="22" r="8" fill="#e6dc6a" stroke="#0b5d50" strokeWidth="2" />
    <circle cx="21" cy="22" r="4" fill="#12a08c" stroke="#0b5d50" />
    <path d="M10 31q12 6 22-1" stroke="#6fd8c8" strokeWidth="2" fill="none" />
  </>
);
const apps = [
  ["Files", <><path d="M19 36Q2 32 3 17Q9 3 19 4Q30 2 35 16Q34 32 19 36z" fill="#f3cf7e" /><path d="M19 35L5 15M19 35L11 7M19 35V4M19 35L27 7M19 35L33 15" stroke="#d39a48" strokeWidth="1.500" /><path d="M25 13l3 8 8 0-6 6 2 8-7-4-7 4 2-8-6-5 8-1z" fill="#ef7f22" stroke="#b54d10" /></>, true],
  ["Notes", <><path d="M5 3h27v34H5z" fill="#f5fbff" /><path d="M7 7h23M7 11h23M7 15h23M7 19h23M7 23h23M7 27h23M7 31h23M7 34h23" stroke="#2d8fc0" strokeWidth="2" /></>],
  ["Genesis", <path d="M31 2Q30 10 23 10H16L12 16V26L16 29H20L22 24H17L19 18H31L27 30Q24 37 14 36Q4 34 4 25V15Q8 3 24 4z" fill="#da1b1b" stroke="#8c0a0a" />],
  ["Disk", <Disk />],
  ["Messenger", <><rect x="4" y="5" width="29" height="29" rx="5" fill="#1893f2" /><path d="M12 9Q26 13 28 20L22 22 25 24 16 32 18 25 15 24Q11 16 12 9z" fill="#fff" /></>],
  ["P editor", <><path d="M10 8Q36 2 33 18Q30 28 20 25L17 36H8L13 18H7z" fill="#158a2e" /><path d="M19 13q6-1 5 4-1 3-6 3z" fill="#2a5a50" /><path d="M5 25V4H22" stroke="#33b050" strokeWidth="1.500" fill="none" /></>],
  ["Reader", <><path d="M5 3h28v33H5z" fill="#f8f8f8" stroke="#bbb" /><path d="M18 9Q20 20 29 25Q20 21 9 28Q18 24 18 9z" fill="none" stroke="#c81818" strokeWidth="2" /></>],
  ["Viewer", <Camera />],
  ["Graphic editor", <><path d="M4 4h9l20 32h-9z" fill="#8a0f8e" stroke="#ddd" /><path d="M32 3L5 37" stroke="#ddd" strokeWidth="4" /><path d="M32 3L5 37" stroke="#3a0a3c" strokeWidth="2" /></>, true],
  ["Viewer 2", <Camera />],
];

function Taskbar() {
  return (
    <footer className="flex h-10 shrink-0 items-stretch border-t border-[#5d7290] bg-gradient-to-b from-[#263c5e] via-[#0b2347] via-25% to-[#0d2c58] text-white">
      <button aria-label="Start" className="w-[60px] pl-2">
        <svg className="h-[37px] w-[37px]" viewBox="0 0 37 37">
          <defs><radialGradient id="orb" cy=".8"><stop offset="0" stopColor="#5fd0ff" /><stop offset=".6" stopColor="#2466a8" /><stop offset="1" stopColor="#284870" /></radialGradient></defs>
          <circle cx="18.500" cy="18.500" r="17.500" fill="url(#orb)" stroke="#8fb4d4" />
          <path d="M4 13Q18 2 33 13Q30 2 18 2Q7 2 4 13z" fill="#b8cce0" opacity=".6" />
          <path d="M10 11q5-3 8-1l-2 8q-4-2-8 0z" fill="#f0622a" />
          <path d="M20 11q4 2 9-1l-2 8q-5 3-9 1z" fill="#8dc63f" />
          <path d="M8 20q4-3 8-1l-2 8q-4-2-8 0z" fill="#4aa8e8" />
          <path d="M17 20q5 3 9 0l-2 8q-4 3-9 1z" fill="#fcd116" />
        </svg>
      </button>
      <div className="flex gap-1">
        {apps.map(([n, d, stacked]) => (
          <div key={n} className="flex w-[58px] gap-px">
            <button aria-label={n} className={`flex flex-1 items-center justify-center rounded-sm border border-[#8a9ab4] bg-gradient-to-br ${n === "Graphic editor" ? "from-[#c9cfdb] to-[#7f8ba3]" : "from-[#66789a] via-[#2a426b] via-50% to-[#1d3a68]"}`}>
              <svg className="h-[34px] w-[34px]" viewBox="0 0 38 40" fill="none">{d}</svg>
            </button>
            {stacked && <span className="w-[3px] rounded-r-sm border-y border-r border-[#8a9ab4] bg-[#2a426b]" />}
          </div>
        ))}
      </div>
      <div className="ml-auto flex items-center">
        <svg className="mr-[6px] h-4 w-4" viewBox="0 0 16 16" fill="none"><rect x="0" y="6" width="16" height="9" rx="1" fill="#d8d8d8" /><path d="M2 9h12M2 11h12M4 13h8" stroke="#666" strokeDasharray="1 1" /><path d="M4 6q0-3 4-3t6-3" stroke="#ccc" /></svg>
        <svg className="mr-3 h-4 w-4" viewBox="0 0 16 16"><circle cx="8" cy="8" r="7.500" fill="#1726b8" stroke="#cfd6ff" /><text x="4.500" y="12" fontSize="12" fontWeight="bold" fill="#fff" fontFamily="Liberation Sans, sans-serif">?</text></svg>
        <svg className="mr-[10px] h-5 w-2" viewBox="0 0 8 20" fill="none" stroke="#fff"><path d="M.5 5.500v-2h5v4h-5zM2.500 3V1.500h5v4H6" /><path d="M1 15h6l-3 3z" fill="#fff" stroke="none" /></svg>
        <svg className="mr-3 h-2 w-2" viewBox="0 0 8 8"><path d="M0 6l4-4 4 4z" fill="#fff" /></svg>
        <svg className="mr-2 h-4 w-4" viewBox="0 0 16 16"><path d="M1.500 1v14" stroke="#fff" /><path d="M3 2q3-1 5 0t6 0v6q-4 1-6 0t-5 0z" fill="#fff" /><circle cx="10.500" cy="11" r="5" fill="#dd2a1b" /><path d="M8.500 9l4 4M12.500 9l-4 4" stroke="#fff" strokeWidth="1.500" /></svg>
        <svg className="mr-2 h-4 w-4" viewBox="0 0 16 16" fill="none" stroke="#fff"><path d="M1 5h3l4-4v14l-4-4H1z" fill="#fff" stroke="none" /><path d="M10 6q1 2 0 4M12 4q2 4 0 8M14 3q3 5 0 10" /></svg>
        <svg className="mr-[10px] h-4 w-4" viewBox="0 0 16 16" fill="none" stroke="#fff"><path d="M5 4h10v8H5zM7 14.500h6M10 12v2M1 2v4h4V2M3 6v8h3M2 0v2M4 0v2" strokeWidth="1.300" /></svg>
        <div className="flex w-[71px] flex-col items-center font-['Open_Sans',sans-serif] text-[12px] leading-[18px]">
          <span>23:35</span>
          <span>2022/12/31</span>
        </div>
        <button aria-label="Show desktop" className="ml-[3px] h-full w-[14px] border border-[#8a9ab4] bg-gradient-to-b from-[#7f8fa8] to-[#1b3259]" />
      </div>
    </footer>
  );
}

export default function App() {
  return (
    <div className="flex h-screen w-full flex-col overflow-hidden bg-black">
      <TitleBar />
      <div className="flex min-h-0 flex-1">
        <div className="w-[9px] shrink-0 border-x-2 border-[#c4cfe2] bg-[linear-gradient(to_bottom,#d8b49c_0%,#cfe0f5_5%,#61718c_9%,#3f5f8d_13%,#c8cfe8_16%,#4aa0b0_19%,#33507f_24%,#a0303c_28%,#b87840_33%,#8030b0_38%,#3f5f8d_44%,#a0b8d0_52%,#3a5a82_60%,#6a80a8_100%)]" />
        <div className="flex min-w-0 flex-1 flex-col">
          <MenuBar />
          <div className="flex min-h-0 flex-1">
            <LeftPanel />
            <Canvas />
            <RightPanel />
          </div>
          <CommandBar />
          <div className={`flex h-8 shrink-0 items-center justify-center border-t-3 border-b border-t-[#708c8c] border-b-black bg-[#b0ffff] pr-[11px] text-black shadow-[inset_0_1px_0_0_#000,inset_0_3px_0_0_#dcffff,inset_0_-2px_0_0_#dcffff,inset_0_-4px_0_0_#5c9a9a] ${mono12}`}>
            cs.d -&gt; cs : 0.0007999
          </div>
        </div>
      </div>
      <Taskbar />
    </div>
  );
}
